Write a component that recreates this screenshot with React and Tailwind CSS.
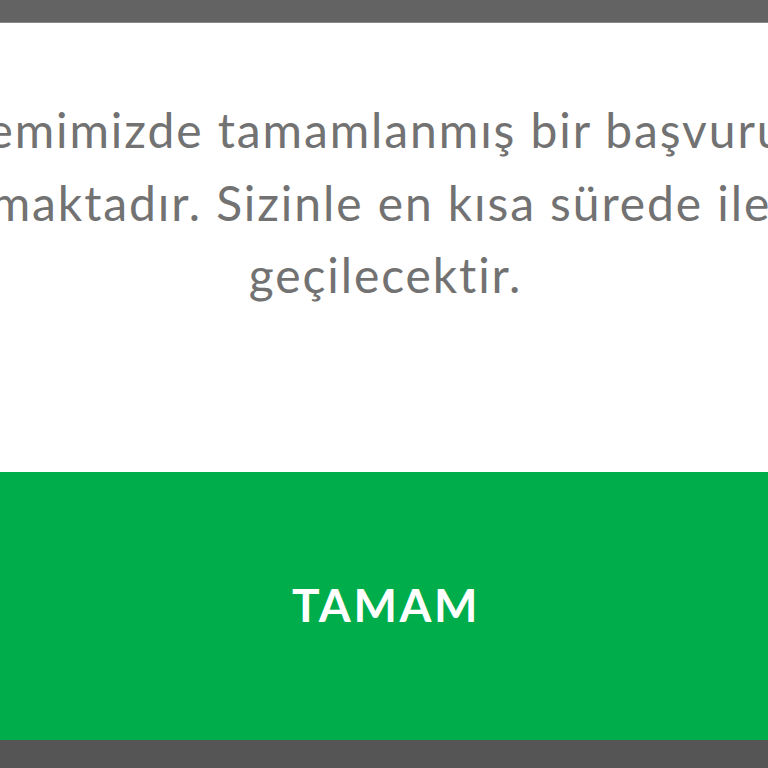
import React from 'react'

export default function App() {
  return (
    <div className="w-[768px] h-[768px] overflow-hidden flex flex-col bg-white">
      <div className="h-[23px] bg-[#636363] border-b border-[#8a8a8a]" />
      <div className="flex-1 flex justify-center pt-[71px] bg-white">
        <p
          className="ml-[3px] whitespace-nowrap text-center text-[48px] leading-[72.5px] tracking-[1.9px] text-[#727272]"
          style={{ fontFamily: 'Lato, "Noto Sans", sans-serif' }}
        >
          Sistemimizde tamamlanmış bir başvurunuz
          <br />
          bulunmaktadır. Sizinle en kısa sürede iletişime
          <br />
          geçilecektir.
        </p>
      </div>
      <button
        className="h-[268px] bg-[#00ad4b] flex items-center justify-center text-white text-[46px] font-bold tracking-[2.6px]"
        style={{ fontFamily: 'Lato, "Noto Sans", sans-serif' }}
      >
        <span className="ml-[4px] mt-[-4px]">TAMAM</span>
      </button>
      <div className="h-[28px] bg-[#555555]" />
    </div>
  )
}
